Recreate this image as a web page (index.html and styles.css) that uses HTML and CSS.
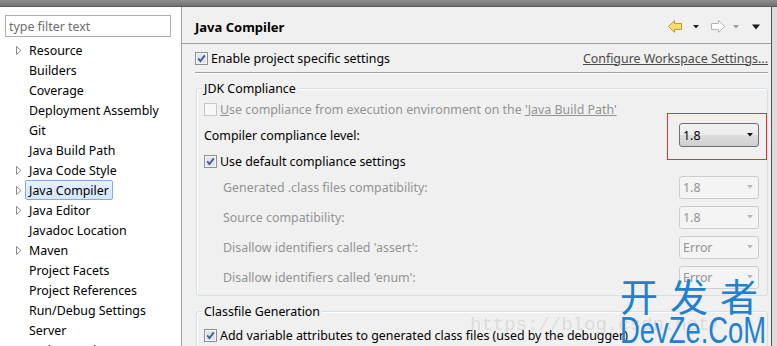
FILE: index.html
```html
<!DOCTYPE html>
<html lang="en">
<head>
<meta charset="UTF-8">
<meta name="viewport" content="width=device-width, initial-scale=1.0">
<title>Properties - Java Compiler</title>
<link rel="stylesheet" href="styles.css">
</head>
<body>
<div class="window">
  <div class="titlebar"></div>

  <div class="main">
    <div class="sidebar">
      <input class="filter" type="text" placeholder="type filter text">
      <ul class="tree">
        <li class="node"><span class="twisty"><svg width="6" height="9" viewBox="0 0 6 9"><path d="M0.5 0.5 L5 4.5 L0.5 8.5 Z" fill="#fff" stroke="#8c8c8c"/></svg></span><span class="label">Resource</span></li>
        <li class="node"><span class="twisty"></span><span class="label">Builders</span></li>
        <li class="node"><span class="twisty"></span><span class="label">Coverage</span></li>
        <li class="node"><span class="twisty"></span><span class="label">Deployment Assembly</span></li>
        <li class="node"><span class="twisty"></span><span class="label">Git</span></li>
        <li class="node"><span class="twisty"></span><span class="label">Java Build Path</span></li>
        <li class="node"><span class="twisty"><svg width="6" height="9" viewBox="0 0 6 9"><path d="M0.5 0.5 L5 4.5 L0.5 8.5 Z" fill="#fff" stroke="#8c8c8c"/></svg></span><span class="label">Java Code Style</span></li>
        <li class="node"><span class="twisty"><svg width="6" height="9" viewBox="0 0 6 9"><path d="M0.5 0.5 L5 4.5 L0.5 8.5 Z" fill="#fff" stroke="#8c8c8c"/></svg></span><span class="label selected">Java Compiler</span></li>
        <li class="node"><span class="twisty"><svg width="6" height="9" viewBox="0 0 6 9"><path d="M0.5 0.5 L5 4.5 L0.5 8.5 Z" fill="#fff" stroke="#8c8c8c"/></svg></span><span class="label">Java Editor</span></li>
        <li class="node"><span class="twisty"></span><span class="label">Javadoc Location</span></li>
        <li class="node"><span class="twisty"><svg width="6" height="9" viewBox="0 0 6 9"><path d="M0.5 0.5 L5 4.5 L0.5 8.5 Z" fill="#fff" stroke="#8c8c8c"/></svg></span><span class="label">Maven</span></li>
        <li class="node"><span class="twisty"></span><span class="label">Project Facets</span></li>
        <li class="node"><span class="twisty"></span><span class="label">Project References</span></li>
        <li class="node"><span class="twisty"></span><span class="label">Run/Debug Settings</span></li>
        <li class="node"><span class="twisty"></span><span class="label">Server</span></li>
        <li class="node"><span class="twisty"></span><span class="label">Task Repository</span></li>
      </ul>
    </div>

    <div class="page">
      <div class="page-header">
        <span class="page-title">Java Compiler</span>
        <svg class="nav" width="93" height="14" viewBox="0 0 93 14">
          <path d="M0.5 6.5 L6.5 0.5 L6.5 3.5 L13.5 3.5 L13.5 9.5 L6.5 9.5 L6.5 12.5 Z" fill="#f8dc70" stroke="#c49a2c"/>
          <path d="M25 5 L31 5 L28 8.5 Z" fill="#222"/>
          <path d="M56.5 6.5 L50.5 0.5 L50.5 3.5 L43.5 3.5 L43.5 9.5 L50.5 9.5 L50.5 12.5 Z" fill="#fff" stroke="#b4b4b4"/>
          <path d="M65 5 L71 5 L68 8.5 Z" fill="#9c9c9c"/>
          <path d="M84 4.5 L92 4.5 L88 9.5 Z" fill="#1a1a1a"/>
        </svg>
      </div>

      <div class="page-body">
        <div class="enable-row">
          <span class="check">
            <svg class="box" width="13" height="13" viewBox="0 0 13 13"><rect x="0.5" y="0.5" width="12" height="12" fill="#f6f6f6" stroke="#8e8f8f"/><rect x="2" y="2" width="9" height="9" fill="#dfe5ee"/><path d="M3.2 6.4 L5.4 9 L9.8 3.4" fill="none" stroke="#3e5b98" stroke-width="1.8"/></svg>
            Enable project specific settings
          </span>
          <span class="link">Configure Workspace Settings...</span>
        </div>

        <div class="group jdk">
          <div class="group-title">JDK Compliance</div>
          <div class="row r-check disabled">
            <span class="check">
              <svg class="box" width="13" height="13" viewBox="0 0 13 13"><rect x="0.5" y="0.5" width="12" height="12" fill="#f7f7f7" stroke="#c6c6c6"/></svg>
              <span><u>U</u>se compliance from execution environment on the <u>'Java Build Path'</u></span>
            </span>
          </div>
          <div class="row r-combo">
            <span>Compiler compliance level:</span>
            <span class="combo"><span>1.8</span><svg width="6" height="4" viewBox="0 0 6 4"><path d="M0 0 L6 0 L3 3.5 Z" fill="#111"/></svg></span>
          </div>
          <div class="row r-check3">
            <span class="check">
              <svg class="box" width="13" height="13" viewBox="0 0 13 13"><rect x="0.5" y="0.5" width="12" height="12" fill="#f6f6f6" stroke="#8e8f8f"/><rect x="2" y="2" width="9" height="9" fill="#dfe5ee"/><path d="M3.2 6.4 L5.4 9 L9.8 3.4" fill="none" stroke="#3e5b98" stroke-width="1.8"/></svg>
              Use default compliance settings
            </span>
          </div>
          <div class="row r-sub disabled">
            <span>Generated .class files compatibility:</span>
            <span class="combo off"><span>1.8</span><svg width="6" height="4" viewBox="0 0 6 4"><path d="M0 0 L6 0 L3 3.5 Z" fill="#b8b8b8"/></svg></span>
          </div>
          <div class="row r-sub disabled">
            <span>Source compatibility:</span>
            <span class="combo off"><span>1.8</span><svg width="6" height="4" viewBox="0 0 6 4"><path d="M0 0 L6 0 L3 3.5 Z" fill="#b8b8b8"/></svg></span>
          </div>
          <div class="row r-sub disabled">
            <span>Disallow identifiers called 'assert':</span>
            <span class="combo off"><span>Error</span><svg width="6" height="4" viewBox="0 0 6 4"><path d="M0 0 L6 0 L3 3.5 Z" fill="#b8b8b8"/></svg></span>
          </div>
          <div class="row r-sub disabled">
            <span>Disallow identifiers called 'enum':</span>
            <span class="combo off"><span>Error</span><svg width="6" height="4" viewBox="0 0 6 4"><path d="M0 0 L6 0 L3 3.5 Z" fill="#b8b8b8"/></svg></span>
          </div>
        </div>

        <div class="group classfile">
          <div class="group-title">Classfile Generation</div>
          <div class="row r-check">
            <span class="check">
              <svg class="box" width="13" height="13" viewBox="0 0 13 13"><rect x="0.5" y="0.5" width="12" height="12" fill="#f6f6f6" stroke="#8e8f8f"/><rect x="2" y="2" width="9" height="9" fill="#dfe5ee"/><path d="M3.2 6.4 L5.4 9 L9.8 3.4" fill="none" stroke="#3e5b98" stroke-width="1.8"/></svg>
              Add variable attributes to generated class files (used by the debugger)
            </span>
          </div>
        </div>
      </div>
    </div>

    <div class="edge"></div>
  </div>

  <div class="highlight"></div>
  <div class="csdn-mark">https://blog.csdn.net/</div>
  <div class="devze-mark">
    <div class="cn">开发者</div>
    <div class="en">DevZe.CoM</div>
  </div>
</div>
</body>
</html>
```

FILE: styles.css
```css
* {
  box-sizing: border-box;
}
body {
  margin: 0;
  width: 777px;
  height: 346px;
  overflow: hidden;
  background-color: #f0f0f0;
  font-family: "Noto Sans", "Liberation Sans", sans-serif;
  font-size: 12.4px;
  color: #000;
}
.window {
  position: relative;
  height: 346px;
  display: flex;
  flex-direction: column;
  overflow: hidden;
}
.titlebar {
  flex: none;
  height: 7px;
  background: linear-gradient(#8e8e8e, #727272);
  border-bottom: 1px solid #5a5a5a;
}
.main {
  flex: 1;
  display: flex;
  min-height: 0;
}

/* left tree */
.sidebar {
  flex: none;
  width: 182px;
  background-color: #fff;
  border-right: 1px solid #a0a0a0;
  padding: 8px 0 0 5px;
}
.filter {
  display: block;
  width: 166px;
  height: 22px;
  margin: 0;
  padding: 0 0 0 3px;
  border: 1px solid #abadb3;
  font-family: inherit;
  font-size: 12.4px;
  outline: none;
}
.filter::placeholder {
  color: #6d6d6d;
}
.tree {
  list-style: none;
  margin: 3px 0 0;
  padding: 0;
}
.node {
  height: 20px;
  display: flex;
  align-items: center;
  padding-left: 11px;
  white-space: nowrap;
}
.twisty {
  width: 13px;
  display: flex;
  align-items: center;
}
.label {
  height: 20px;
  line-height: 17px;
  padding: 1px 3px 0;
  margin-left: -4px;
  border: 1px solid transparent;
  border-radius: 2px;
}
.label.selected {
  background: linear-gradient(#e6f1fd, #d4e6fb);
  border-color: #84acdd;
}

/* right page */
.page {
  flex: none;
  width: 589px;
  display: flex;
  flex-direction: column;
}
.page-header {
  flex: none;
  height: 37px;
  display: flex;
  align-items: center;
  justify-content: space-between;
  padding: 4px 10px 0 13px;
  border-bottom: 1px solid #a0a0a0;
}
.page-title {
  font-weight: bold;
  font-size: 13px;
}
.page-body {
  flex: none;
  padding: 0 3px 0 14px;
}
.enable-row {
  height: 29px;
  display: flex;
  align-items: center;
  justify-content: space-between;
  margin-left: -1px;
  border-bottom: 1px solid #a0a0a0;
  box-shadow: 0 1px 0 #fff;
}
.link {
  color: #4a4a4a;
  text-decoration: underline;
}
.check {
  display: flex;
  align-items: center;
  gap: 3px;
  white-space: nowrap;
}
.group {
  margin-top: 15px;
  border: 1px solid #d5dfe5;
  border-radius: 3px;
  padding: 0 8px 3px 7px;
  box-shadow: inset 1px 1px 0 #fff;
}
.group-title {
  display: table;
  margin: -9px 0 0 -2px;
  padding: 0 2px;
  line-height: 17px;
  background-color: #f0f0f0;
}
.row {
  display: flex;
  align-items: center;
  justify-content: space-between;
  white-space: nowrap;
}
.jdk .r-check {
  height: 20px;
  margin-top: 2px;
}
.classfile .r-check {
  height: 20px;
  margin-top: 5px;
}
.r-combo {
  height: 32px;
}
.r-check3 {
  height: 21px;
}
.r-sub {
  height: 30px;
  padding-left: 19px;
}
.disabled {
  color: #939393;
}
.disabled u {
  text-decoration-color: #939393;
}
.combo {
  width: 80px;
  height: 24px;
  display: flex;
  align-items: center;
  justify-content: space-between;
  padding: 0 5px 0 3px;
  border: 1px solid #707070;
  border-radius: 3px;
  background: linear-gradient(#f2f2f2, #ebebeb 50%, #dddddd 51%, #cfcfcf);
  color: #000;
}
.combo.off {
  height: 23px;
  border-color: #cdcdcd;
  background: #f4f4f4;
  color: #939393;
}
.edge {
  flex: none;
  width: 6px;
  border-left: 1px solid #555;
  background-color: #dcdcdc;
}

/* overlays on the screenshot */
.highlight {
  position: absolute;
  left: 667px;
  top: 113px;
  width: 100px;
  height: 47px;
  border: 1px solid #e8312f;
}
.csdn-mark {
  position: absolute;
  left: 470px;
  top: 314px;
  font-family: "Liberation Mono", monospace;
  font-size: 19px;
  color: rgba(140, 140, 140, 0.22);
}
.devze-mark {
  position: absolute;
  left: 620px;
  top: 274px;
  color: #2280d2;
}
.devze-mark .cn {
  font-family: "Noto Sans CJK SC", sans-serif;
  font-size: 38px;
  line-height: 42px;
  letter-spacing: 12px;
}
.devze-mark .en {
  font-family: "Liberation Sans", sans-serif;
  font-size: 37px;
  line-height: 30px;
  transform: scaleX(0.74);
  transform-origin: left;
}
```
